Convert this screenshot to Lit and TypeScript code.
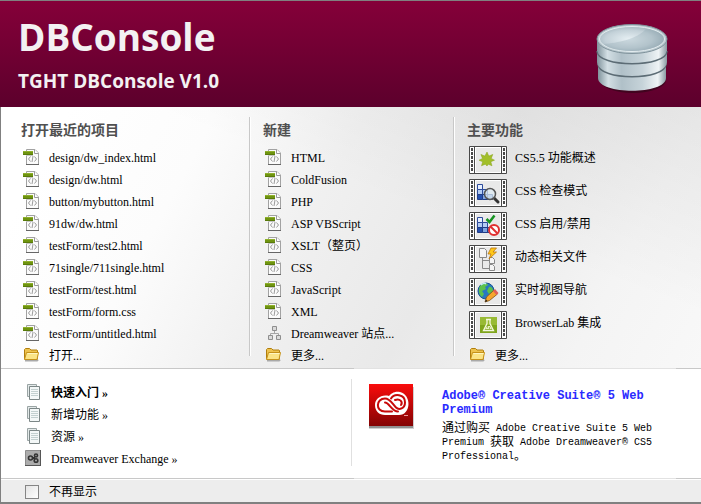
import { LitElement, html, css, svg, nothing } from "lit";
import { customElement, property } from "lit/decorators.js";

const codeIcon = html`<svg class="icon" viewBox="0 0 16 16" width="16" height="16" aria-hidden="true">
  <path d="M3.5.5h8.500l3.500 3.500v11.500h-12z" fill="#fbfbfb" stroke="#a2a2a2" />
  <path d="M3 15.500h13" stroke="#666" />
  <path d="M11.500.500v4h4" fill="#fff" stroke="#9a9a9a" />
  <path d="M7.500 7.500l-2 2.500 2 2.500M11.500 7.500l2 2.500-2 2.500M10 7l-1 6" fill="none" stroke="#9a9a9a" />
  <path d="M0 2h10v4H0z" fill="#6f9410" />
  <path d="M0 2h10v1H0z" fill="#8fb02c" />
  <path d="M0 5h10v1H0z" fill="#587a0a" />
  <path d="M3 6h7v1H3z" fill="#c5c5c5" />
</svg>`;

const folderIcon = html`<svg class="icon" viewBox="0 0 16 16" width="16" height="16" aria-hidden="true">
  <path d="M2 13.500h12l1-1" fill="none" stroke="#a9a9a9" stroke-width="2" />
  <path d="M1.500 12V2.500l1-1h4l1.500 1.500h6l.5.5V12z" fill="#edc24e" stroke="#b17e0c" />
  <path d="M1.500 12.500L3.500 5.500h12l-1.500 7z" fill="#fbe486" stroke="#c6921a" />
  <path d="M4.500 6.500h10" stroke="#fff6c2" />
</svg>`;

const siteIcon = html`<svg class="icon" viewBox="0 0 16 16" width="16" height="16" aria-hidden="true">
  <path d="M9.500 5v3.500M5.500 11V8.500h8V11" fill="none" stroke="#a5a5a5" />
  <path d="M7.500 1.500h4v4h-4zM3.500 10.500h4v4h-4zM11.500 10.500h4v4h-4z" fill="#dadada" stroke="#8e8e8e" />
</svg>`;

const pagesIcon = html`<svg class="icon" viewBox="0 0 16 16" width="16" height="16" aria-hidden="true">
  <path d="M2.500.5h9v12h-9z" fill="#e4eaea" stroke="#9aa4a4" />
  <path d="M4.500 2.500h10v13h-10z" fill="#f4f8f8" stroke="#7c8787" />
  <path d="M6 5.500h7M6 7.500h7M6 9.500h7M6 11.500h7" stroke="#c3d0d0" />
</svg>`;

const exchangeIcon = html`<svg class="icon" viewBox="0 0 16 16" width="16" height="16" aria-hidden="true">
  <path d="M.5.500h15v15H.500z" fill="#acacac" stroke="#8c8c8c" />
  <path d="M0 15.500h16M15.500 0v16" stroke="#565656" />
  <circle cx="5.500" cy="8" r="2" fill="#aaa" stroke="#333" stroke-width="1.600" />
  <path d="M7 8h3" stroke="#333" stroke-width="2" />
  <circle cx="11" cy="5.500" r="1.500" fill="#aaa" stroke="#333" stroke-width="1.600" />
  <circle cx="11" cy="10.500" r="1.800" fill="#aaa" stroke="#333" stroke-width="1.600" />
</svg>`;

const icons = { code: codeIcon, folder: folderIcon, site: siteIcon, pages: pagesIcon, exchange: exchangeIcon };
type IconName = keyof typeof icons;

const blocks = svg`
  <path d="M8.500 5.500h5v5h-5z" fill="#e6efff" stroke="#2c4a9a" />
  <path d="M8.500 10.500h5v5h-5zM13.500 10.500h5v5h-5z" fill="#b4cdf4" stroke="#2c4a9a" />
  <path d="M8.500 15.500h5v5h-5z" fill="#2450b0" stroke="#1f3c86" />
  <path d="M13.500 15.500h5v5h-5zM18.500 15.500h5v5h-5z" fill="#7fa4e0" stroke="#1f3c86" />`;

const art = {
  star: svg`<path d="M18 6l1.800 4.100 4-1.700-1.600 4 3.300 1.800-3.700 1.500 1.200 4.100-3.700-1.600L18 20l-1.700-1.800-3.800 1.600 1.200-4.100-3.700-1.500 3.500-1.800-1.600-4 4 1.700z" fill="#a2bf2a" stroke="#86a31c" stroke-width=".5" />`,
  inspect: svg`${blocks}
    <path d="M25 19l4 4" stroke="#333" stroke-width="3" stroke-linecap="round" />
    <circle cx="21" cy="15" r="5.500" fill="#dce9f2" fill-opacity=".75" stroke="#555" stroke-width="1.500" />`,
  toggle: svg`${blocks}
    <path d="M17.500 7l3 3 5-6.500" fill="none" stroke="#169321" stroke-width="2.500" />
    <circle cx="25" cy="18" r="5" fill="#fff" stroke="#e03030" stroke-width="2" />
    <path d="M21.500 14.500l7 7" stroke="#e03030" stroke-width="2" />`,
  related: svg`<path d="M13.500 12v11.500H20M13.500 15.500H20" fill="none" stroke="#888" />
    <path d="M10.500 3.500h5l2 2v7h-7zM20.500 12.500h3l2 2v4h-5zM20.500 19.500h3l2 2v4h-5z" fill="#f4f4f4" stroke="#888" />
    <path d="M22 3l-3 6h3l-2 5 7.500-7H24l3.500-4z" fill="#ffc818" stroke="#bb750a" stroke-width=".8" />`,
  globe: svg`<circle cx="17" cy="13" r="8" fill="#2878c0" stroke="#195592" />
    <path d="M11 8c3-3 7-3 8-1l-3 2 1 2-4 2 2 3-2 3c-3-2-4-7-2-11zM20 9c3-1 4 2 4 4l-4 3-2-3z" fill="#5cc14c" />
    <path d="M12 7c2-2 4-2 5-1" stroke="#c4ecfb" stroke-width="1.500" fill="none" />
    <path d="M16 24l1.500-5L25 12l3.500 4-8 6.500z" fill="#f6a52c" stroke="#805014" stroke-width=".8" />
    <path d="M24 13l2-2 3.500 4-2 2z" fill="#e05f56" />
    <path d="M16 24l1-2.500 1.500 1.500z" fill="#222" />`,
  flask: svg`<path d="M11 6h17v16H11z" fill="#7fa51c" /><path d="M11 6h17v8H11z" fill="#98ba35" />
    <path d="M17 8.500h5M18 8.500v4L14.500 19.500h10L21 12.500v-4" fill="none" stroke="#f4f8df" stroke-width="1.300" />
    <path d="M16 18l2-3h3l2 3z" fill="#e8f1bd" /><path d="M18 16h1M20 17h1" stroke="#688d12" />`,
};
type ArtName = keyof typeof art;

const holes = [3, 7, 11, 15, 19, 23];
const film = (name: ArtName) => html`<svg class="film" viewBox="0 0 38 28" width="38" height="28" aria-hidden="true">
  <path d="M.5.500h37v27H.500z" fill="#fff" stroke="#484848" />
  <path d="M5.500 1v26M32.500 1v26" stroke="#484848" />
  ${holes.map((y) => svg`<path d="M2 ${y - 1}h2v3H2zM34 ${y - 1}h2v3h-2z" fill="#4a4a4a" />`)}
  <path d="M7 2h24v24H7z" fill="#e9e9e9" />
  ${art[name]}
</svg>`;

interface Entry {
  icon: IconName;
  label: string;
  strong?: boolean;
  arrow?: boolean;
}

const code = (label: string): Entry => ({ icon: "code", label });

const recent: Entry[] = [
  ...["design/dw_index.html", "design/dw.html", "button/mybutton.html", "91dw/dw.html", "testForm/test2.html",
    "71single/711single.html", "testForm/test.html", "testForm/form.css", "testForm/untitled.html"].map(code),
  { icon: "folder", label: "打开..." },
];

const create: Entry[] = [
  ...["HTML", "ColdFusion", "PHP", "ASP VBScript", "XSLT（整页）", "CSS", "JavaScript", "XML"].map(code),
  { icon: "site", label: "Dreamweaver 站点..." },
  { icon: "folder", label: "更多..." },
];

const features: { art: ArtName; label: string }[] = [
  { art: "star", label: "CS5.5 功能概述" },
  { art: "inspect", label: "CSS 检查模式" },
  { art: "toggle", label: "CSS 启用/禁用" },
  { art: "related", label: "动态相关文件" },
  { art: "globe", label: "实时视图导航" },
  { art: "flask", label: "BrowserLab 集成" },
];

const moreFeatures: Entry[] = [{ icon: "folder", label: "更多..." }];

const help: Entry[] = [
  { icon: "pages", label: "快速入门", strong: true, arrow: true },
  { icon: "pages", label: "新增功能", arrow: true },
  { icon: "pages", label: "资源", arrow: true },
  { icon: "exchange", label: "Dreamweaver Exchange", arrow: true },
];

@customElement("link-list")
class LinkList extends LitElement {
  static styles = css`
    :host { display: block; }
    ul { list-style: none; margin: 0; padding: 0; }
    a {
      display: flex;
      align-items: center;
      gap: 10px;
      height: 22px;
      color: #000;
      text-decoration: none;
      white-space: nowrap;
    }
    .icon { display: block; flex: none; margin-bottom: 2px; }
    .strong { font-weight: bold; }
  `;

  @property({ attribute: false }) entries: Entry[] = [];

  render() {
    return html`<ul>
      ${this.entries.map(
        (e) => html`<li><a href="#" class=${e.strong ? "strong" : "plain"}>${icons[e.icon]}<span>${e.label}${e.arrow ? " »" : nothing}</span></a></li>`,
      )}
    </ul>`;
  }
}

@customElement("app-root")
class AppRoot extends LitElement {
  static styles = css`
    :host {
      display: block;
      font: 12px/22px "Liberation Serif", "Noto Sans CJK SC", serif;
      color: #000;
    }
    * { box-sizing: border-box; }
    ul { list-style: none; margin: 0; padding: 0; }
    .window { border-top: 1px solid #808080; border-bottom: 2px solid #808080; }
    .banner {
      display: flex;
      justify-content: space-between;
      align-items: center;
      height: 106px;
      padding: 4px 32px 0 18px;
      background: linear-gradient(#850039, #5c002c);
      color: #f3f1f2;
      font-family: "Open Sans", "Noto Sans", sans-serif;
      font-weight: bold;
    }
    .banner h1 { margin: 0; font-size: 37px; line-height: 50px; }
    .banner p { margin: 0; font-size: 19px; line-height: 38px; }
    .database { display: block; margin-top: 6px; }
    .body { border-left: 1px solid #808080; }
    .columns {
      display: grid;
      grid-template-columns: 248fr 204fr 248fr;
      padding: 10px 0 1px;
      background:
        linear-gradient(to bottom left, rgba(0, 0, 0, 0.06), transparent 40%),
        linear-gradient(118deg, #fff 8%, #fcfcfc 26%, #f0f0f0 44%, #e9e9e9 62%, #f4f4f4 84%, #f8f8f8);
    }
    .column { padding: 1px 0 0 16px; min-width: 0; }
    .column:first-child { padding-left: 22px; }
    .divided {
      background:
        linear-gradient(#c8c8c8, #c8c8c8) 0 0 / 1px calc(100% - 11px) no-repeat,
        linear-gradient(#fff, #fff) 1px 0 / 1px calc(100% - 11px) no-repeat;
    }
    h2 {
      margin: 0 0 6px -2px;
      font: bold 14px/22px "Noto Sans CJK SC", sans-serif;
      color: #505050;
    }
    .column > link-list { padding-top: 1px; }
    .features a {
      display: flex;
      gap: 8px;
      height: 33px;
      color: #000;
      line-height: 24px;
      text-decoration: none;
    }
    .film { display: block; flex: none; }
    .lower {
      display: grid;
      grid-template-columns: 1fr 1fr;
      padding: 11px 0 9px;
      background:
        linear-gradient(90deg, #c8c8c8 50.4%, #e2e2e2 50.4% 96.5%, #c8c8c8 96.5%) top / 100% 1px no-repeat,
        linear-gradient(90deg, #c8c8c8 50.4%, #e2e2e2 50.4% 96.5%, #c8c8c8 96.5%) bottom / 100% 1px no-repeat,
        #fff;
    }
    .help { padding: 3px 0 0 24px; }
    .promo {
      display: flex;
      align-items: flex-start;
      gap: 28px;
      margin-bottom: 4px;
      padding: 5px 0 0 16px;
      border-left: 1px solid #e0e0e0;
    }
    .logo { display: block; flex: none; }
    .promo-text {
      max-width: 218px;
      padding-top: 5px;
      font-family: "Liberation Mono", "Noto Sans CJK SC", monospace;
    }
    .promo h3 { margin: 0 0 5px; font-size: 12px; line-height: 14px; }
    .promo h3 a { color: #2a2aff; text-decoration: none; }
    .promo p { margin: 0; font-size: 10px; line-height: 14px; }
    .han { display: inline-block; font-size: 12px; line-height: 14px; vertical-align: top; }
    .foot {
      display: flex;
      align-items: center;
      gap: 10px;
      height: 23px;
      padding: 1px 0 0 24px;
      border-top: 1px solid #fff;
      background: #ededed;
    }
    .foot input {
      appearance: none;
      width: 14px;
      height: 14px;
      margin: 0;
      border: 1px solid #858585;
      background: linear-gradient(135deg, #e4e4e4, #fff);
    }
  `;

  render() {
    return html`<main class="window">
      <header class="banner">
        <div><h1>DBConsole</h1><p>TGHT DBConsole V1.0</p></div>
        <svg class="database" width="74" height="72" viewBox="0 0 74 72" aria-hidden="true">
          <defs>
            <linearGradient id="side"><stop offset="0" stop-color="#80939c" /><stop offset=".15" stop-color="#d3dfe4" /><stop offset=".35" stop-color="#b0c0c8" /><stop offset=".65" stop-color="#c6d3d9" /><stop offset=".88" stop-color="#eef3f5" /><stop offset="1" stop-color="#8a9ba3" /></linearGradient>
            <radialGradient id="lid" cx=".45" cy=".5" r=".6"><stop offset="0" stop-color="#e6eff3" /><stop offset=".6" stop-color="#c3d1d8" /><stop offset="1" stop-color="#94a8b2" /></radialGradient>
          </defs>
          <ellipse cx="38" cy="57" rx="33" ry="13" fill="#2c0716" opacity=".6" />
          <path d="M3 40v15c0 17 68 17 68 0V40z" fill="url(#side)" />
          <path d="M3 41c0 17 68 17 68 0" fill="none" stroke="#5c6c75" stroke-width="1.500" />
          <path d="M2 27v12c0 17 70 17 70 0V27z" fill="url(#side)" />
          <path d="M2 28c0 17 70 17 70 0" fill="none" stroke="#5c6c75" stroke-width="1.500" />
          <path d="M2 15v11c0 17 70 17 70 0V15z" fill="url(#side)" />
          <ellipse cx="37" cy="16" rx="35" ry="14.500" fill="#b9c8ce" stroke="#7f929b" />
          <ellipse cx="37" cy="16" rx="32.500" ry="12.500" fill="url(#lid)" stroke="#e4edf0" />
          <path d="M9 21c13-1 33-5 42-15 11 2 18 5 18 10s-14 12-32 12c-13 0-24-2-28-7z" fill="#8fa4ae" opacity=".3" />
        </svg>
      </header>
      <div class="body">
        <div class="columns">
          <section class="column"><h2>打开最近的项目</h2><link-list .entries=${recent}></link-list></section>
          <section class="column divided"><h2>新建</h2><link-list .entries=${create}></link-list></section>
          <section class="column divided">
            <h2>主要功能</h2>
            <ul class="features">${features.map((f) => html`<li><a href="#">${film(f.art)}<span>${f.label}</span></a></li>`)}</ul>
            <link-list .entries=${moreFeatures}></link-list>
          </section>
        </div>
        <div class="lower">
          <link-list class="help" .entries=${help}></link-list>
          <section class="promo">
            <svg class="logo" width="46" height="46" viewBox="0 0 46 46" aria-hidden="true">
              <defs><linearGradient id="red" x2="0" y2="1"><stop offset="0" stop-color="#fa0c0c" /><stop offset="1" stop-color="#830303" /></linearGradient></defs>
              <path d="M1 3h45v42H1z" fill="#777" opacity=".35" /><path d="M1 2h44v42H1z" fill="#666" opacity=".6" />
              <path d="M1 0h44v42H1z" fill="url(#red)" />
              <path d="M17 31h14c12 0 13-20 1-23-6-1-9 2-11 4C13 10 7 15 7 21c0 6 4 10 10 10z" fill="#fff" />
              <path d="M24 27.500h-7c-10 0-9-13 0-13 5 0 7 5 11 9 3 3 9 1 9-5 0-9-11-9-14-4M17 18.500c4 0 7 9 13 9M27 16c5-2 8 2 6 5" fill="none" stroke="#c70909" stroke-width="2" stroke-linecap="round" />
              <path d="M36 31.500h4" stroke="#e99" />
            </svg>
            <div class="promo-text">
              <h3><a href="#">Adobe® Creative Suite® 5 Web Premium</a></h3>
              <p><span class="han">通过购买</span> Adobe Creative Suite 5 Web Premium <span class="han">获取</span> Adobe Dreamweaver® CS5 Professional<span class="han">。</span></p>
            </div>
          </section>
        </div>
        <footer class="foot"><input type="checkbox" id="hide" /><label for="hide">不再显示</label></footer>
      </div>
    </main>`;
  }
}
